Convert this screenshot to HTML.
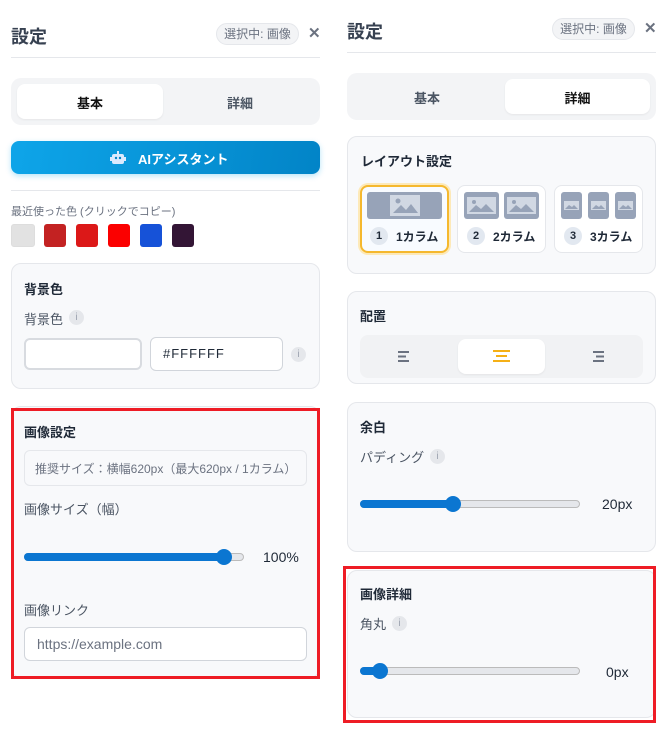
<!DOCTYPE html><html><head><meta charset="utf-8"><style>
*{box-sizing:border-box;margin:0;padding:0}
body{width:670px;height:732px;background:#fff;position:relative;overflow:hidden;font-family:"Liberation Sans","Noto Sans CJK JP",sans-serif;color:#374151}
.a{position:absolute}
.h1{font-size:18px;font-weight:bold;color:#374151}
.badge{height:22px;border:1px solid #e5e7eb;background:#f3f4f6;border-radius:11px;font-size:12px;color:#6b7280;line-height:20px;text-align:center}
.x{font-size:15px;color:#6b7280;font-weight:bold}
.div{height:1px;background:#e5e7eb}
.tabs{background:#f3f4f6;border-radius:10px}
.tab{background:#fff;border-radius:8px;box-shadow:0 1px 2px rgba(0,0,0,.06)}
.tt{font-size:13px;font-weight:bold;text-align:center}
.card{background:#f8f9fb;border:1px solid #e5e7eb;border-radius:10px}
.ct{font-size:13px;font-weight:bold;color:#1f2937}
.lb{font-size:13px;color:#4b5563}
.info{width:15px;height:15px;border-radius:50%;background:#e5e7eb;color:#9ca3af;font-size:10px;text-align:center;line-height:15px}
.inp{background:#fff;border:1px solid #d1d5db;border-radius:6px}
.track{height:8px;border-radius:4px;background:#e5e7eb;border:1px solid #bbb}
.fill{height:8px;border-radius:4px;background:#0b76d1}
.thumb{width:16px;height:16px;border-radius:50%;background:#0b76d1}
.red{border:3px solid #ee1c25}
.opt{background:#fff;border:1px solid #e5e7eb;border-radius:8px}
.img{background:#97a3b8;border-radius:3px}
.num{width:18px;height:18px;border-radius:50%;background:#e2e8f0;font-size:11px;font-weight:bold;text-align:center;line-height:18px;color:#1f2937}
.ol{font-size:12px;font-weight:bold;color:#1f2937}
</style></head><body>
<!-- LEFT -->
<div class="a h1" style="left:11px;top:23px">設定</div>
<div class="a badge" style="left:216px;top:23px;width:83px">選択中: 画像</div>
<div class="a x" style="left:308px;top:24px">✕</div>
<div class="a div" style="left:11px;top:57px;width:309px"></div>
<div class="a tabs" style="left:11px;top:78px;width:309px;height:47px"></div>
<div class="a tab" style="left:17px;top:84px;width:146px;height:35px"></div>
<div class="a tt" style="left:17px;top:93px;width:146px;color:#111">基本</div>
<div class="a tt" style="left:166px;top:93px;width:148px;color:#4b5563">詳細</div>
<div class="a" style="left:11px;top:141px;width:309px;height:33px;border-radius:8px;background:linear-gradient(100deg,#0ea5e9,#0284c7);box-shadow:0 2px 6px rgba(14,165,233,.3)"></div>
<svg class="a" style="left:110px;top:150px" width="16" height="16" viewBox="0 0 16 16"><rect x="2" y="4" width="12" height="10" rx="2" fill="#dbeafe"/><rect x="7" y="1" width="2" height="3" fill="#dbeafe"/><rect x="0" y="7" width="2" height="4" fill="#dbeafe"/><rect x="14" y="7" width="2" height="4" fill="#dbeafe"/><circle cx="6" cy="8" r="1.2" fill="#0284c7"/><circle cx="10" cy="8" r="1.2" fill="#0284c7"/></svg>
<div class="a" style="left:138px;top:149px;font-size:13px;font-weight:bold;color:#fff">AIアシスタント</div>
<div class="a div" style="left:11px;top:190px;width:309px"></div>
<div class="a" style="left:11px;top:203px;font-size:11px;color:#6b7280">最近使った色 (クリックでコピー)</div>
<div class="a" style="left:11px;top:224px;width:24px;height:23px;border-radius:3px;background:#e2e2e2;border:1px solid #ddd"></div>
<div class="a" style="left:44px;top:224px;width:22px;height:23px;border-radius:3px;background:#c32222"></div>
<div class="a" style="left:76px;top:224px;width:22px;height:23px;border-radius:3px;background:#dc1818"></div>
<div class="a" style="left:108px;top:224px;width:22px;height:23px;border-radius:3px;background:#fb0000"></div>
<div class="a" style="left:140px;top:224px;width:22px;height:23px;border-radius:3px;background:#1652d8"></div>
<div class="a" style="left:172px;top:224px;width:22px;height:23px;border-radius:3px;background:#331535"></div>
<div class="a card" style="left:11px;top:263px;width:309px;height:126px"></div>
<div class="a ct" style="left:24px;top:279px">背景色</div>
<div class="a lb" style="left:24px;top:309px">背景色</div>
<div class="a info" style="left:69px;top:310px">i</div>
<div class="a inp" style="left:24px;top:338px;width:118px;height:32px;border:2px solid #d8dbe0"></div>
<div class="a inp" style="left:150px;top:337px;width:133px;height:34px"></div>
<div class="a" style="left:163px;top:346px;font-size:13px;color:#1f2937;letter-spacing:1px">#FFFFFF</div>
<div class="a info" style="left:291px;top:347px">i</div>
<div class="a card" style="left:11px;top:406px;width:309px;height:272px"></div>
<div class="a red" style="left:11px;top:408px;width:309px;height:271px"></div>
<div class="a ct" style="left:24px;top:422px">画像設定</div>
<div class="a" style="left:24px;top:450px;width:283px;height:36px;border:1px solid #e5e7eb;border-radius:6px;background:#f8f9fb"></div>
<div class="a" style="left:35px;top:460px;font-size:12px;color:#6b7280">推奨サイズ：横幅620px（最大620px / 1カラム）</div>
<div class="a lb" style="left:24px;top:499px">画像サイズ（幅）</div>
<div class="a track" style="left:24px;top:553px;width:220px"></div>
<div class="a fill" style="left:24px;top:553px;width:205px"></div>
<div class="a thumb" style="left:216px;top:549px"></div>
<div class="a" style="left:263px;top:549px;font-size:14px;color:#1f2937">100%</div>
<div class="a lb" style="left:24px;top:600px">画像リンク</div>
<div class="a inp" style="left:24px;top:627px;width:283px;height:34px"></div>
<div class="a" style="left:37px;top:636px;font-size:14px;color:#6b7280">https://example.com</div>
<!-- RIGHT -->
<div class="a h1" style="left:347px;top:18px">設定</div>
<div class="a badge" style="left:552px;top:18px;width:83px">選択中: 画像</div>
<div class="a x" style="left:644px;top:19px">✕</div>
<div class="a div" style="left:347px;top:52px;width:309px"></div>
<div class="a tabs" style="left:347px;top:73px;width:309px;height:47px"></div>
<div class="a tab" style="left:505px;top:79px;width:145px;height:35px"></div>
<div class="a tt" style="left:353px;top:88px;width:148px;color:#4b5563">基本</div>
<div class="a tt" style="left:505px;top:88px;width:145px;color:#111">詳細</div>
<div class="a card" style="left:347px;top:136px;width:309px;height:138px"></div>
<div class="a ct" style="left:361px;top:151px">レイアウト設定</div>
<div class="a opt" style="left:360px;top:185px;width:89px;height:68px;border:2px solid #f5b82e;background:#f8fbff;box-shadow:0 0 0 2px #fde9b8"></div>
<div class="a img" style="left:367px;top:192px;width:75px;height:27px"></div>
<svg class="a" style="left:390px;top:195px" width="30" height="21" viewBox="0 0 30 21"><rect width="30" height="21" fill="#d1d8e3"/><circle cx="8" cy="6" r="2.5" fill="#97a3b8"/><path d="M3 18 L11 10 L16 15 L21 9 L28 18Z" fill="#97a3b8"/></svg>
<div class="a num" style="left:370px;top:227px">1</div>
<div class="a ol" style="left:396px;top:228px">1カラム</div>
<div class="a opt" style="left:457px;top:185px;width:89px;height:68px"></div>
<div class="a img" style="left:464px;top:192px;width:35px;height:27px"></div>
<div class="a img" style="left:504px;top:192px;width:35px;height:27px"></div>
<svg class="a" style="left:467px;top:197px" width="29" height="17" viewBox="0 0 29 17"><rect width="29" height="17" fill="#d1d8e3"/><circle cx="7" cy="5" r="2" fill="#97a3b8"/><path d="M2 15 L9 8 L14 12 L19 7 L27 15Z" fill="#97a3b8"/></svg>
<svg class="a" style="left:507px;top:197px" width="29" height="17" viewBox="0 0 29 17"><rect width="29" height="17" fill="#d1d8e3"/><circle cx="7" cy="5" r="2" fill="#97a3b8"/><path d="M2 15 L9 8 L14 12 L19 7 L27 15Z" fill="#97a3b8"/></svg>
<div class="a num" style="left:467px;top:227px">2</div>
<div class="a ol" style="left:493px;top:228px">2カラム</div>
<div class="a opt" style="left:554px;top:185px;width:89px;height:68px"></div>
<div class="a img" style="left:561px;top:192px;width:21px;height:27px"></div>
<div class="a img" style="left:588px;top:192px;width:21px;height:27px"></div>
<div class="a img" style="left:615px;top:192px;width:21px;height:27px"></div>
<svg class="a" style="left:564px;top:201px" width="15" height="9" viewBox="0 0 15 9"><rect width="15" height="9" fill="#d1d8e3"/><path d="M1 8 L5 4 L8 6 L10 4 L14 8Z" fill="#97a3b8"/></svg>
<svg class="a" style="left:591px;top:201px" width="15" height="9" viewBox="0 0 15 9"><rect width="15" height="9" fill="#d1d8e3"/><path d="M1 8 L5 4 L8 6 L10 4 L14 8Z" fill="#97a3b8"/></svg>
<svg class="a" style="left:618px;top:201px" width="15" height="9" viewBox="0 0 15 9"><rect width="15" height="9" fill="#d1d8e3"/><path d="M1 8 L5 4 L8 6 L10 4 L14 8Z" fill="#97a3b8"/></svg>
<div class="a num" style="left:564px;top:227px">3</div>
<div class="a ol" style="left:590px;top:228px">3カラム</div>
<div class="a card" style="left:347px;top:291px;width:309px;height:93px"></div>
<div class="a ct" style="left:360px;top:306px">配置</div>
<div class="a" style="left:360px;top:335px;width:283px;height:43px;background:#f1f2f4;border-radius:8px"></div>
<div class="a tab" style="left:458px;top:339px;width:87px;height:35px"></div>
<svg class="a" style="left:398px;top:351px" width="12" height="11" viewBox="0 0 12 11"><rect x="0" y="0" width="11" height="2" fill="#6b7280"/><rect x="0" y="4.5" width="8" height="2" fill="#6b7280"/><rect x="0" y="9" width="11" height="2" fill="#6b7280"/></svg>
<svg class="a" style="left:493px;top:350px" width="17" height="12" viewBox="0 0 17 12"><rect x="0" y="0" width="17" height="2" fill="#f5b016"/><rect x="3" y="5" width="11" height="2" fill="#f5b016"/><rect x="0" y="10" width="17" height="2" fill="#f5b016"/></svg>
<svg class="a" style="left:592px;top:351px" width="12" height="11" viewBox="0 0 12 11"><rect x="1" y="0" width="11" height="2" fill="#6b7280"/><rect x="4" y="4.5" width="8" height="2" fill="#6b7280"/><rect x="1" y="9" width="11" height="2" fill="#6b7280"/></svg>
<div class="a card" style="left:347px;top:402px;width:309px;height:150px"></div>
<div class="a ct" style="left:360px;top:417px">余白</div>
<div class="a lb" style="left:360px;top:447px">パディング</div>
<div class="a info" style="left:430px;top:449px">i</div>
<div class="a track" style="left:360px;top:500px;width:220px"></div>
<div class="a fill" style="left:360px;top:500px;width:95px"></div>
<div class="a thumb" style="left:445px;top:496px"></div>
<div class="a" style="left:602px;top:496px;font-size:14px;color:#1f2937">20px</div>
<div class="a card" style="left:347px;top:570px;width:309px;height:148px"></div>
<div class="a red" style="left:343px;top:566px;width:313px;height:157px"></div>
<div class="a ct" style="left:360px;top:584px">画像詳細</div>
<div class="a lb" style="left:360px;top:614px">角丸</div>
<div class="a info" style="left:392px;top:616px">i</div>
<div class="a track" style="left:360px;top:667px;width:220px"></div>
<div class="a fill" style="left:360px;top:667px;width:22px"></div>
<div class="a thumb" style="left:372px;top:663px"></div>
<div class="a" style="left:606px;top:664px;font-size:14px;color:#1f2937">0px</div>
</body></html>
